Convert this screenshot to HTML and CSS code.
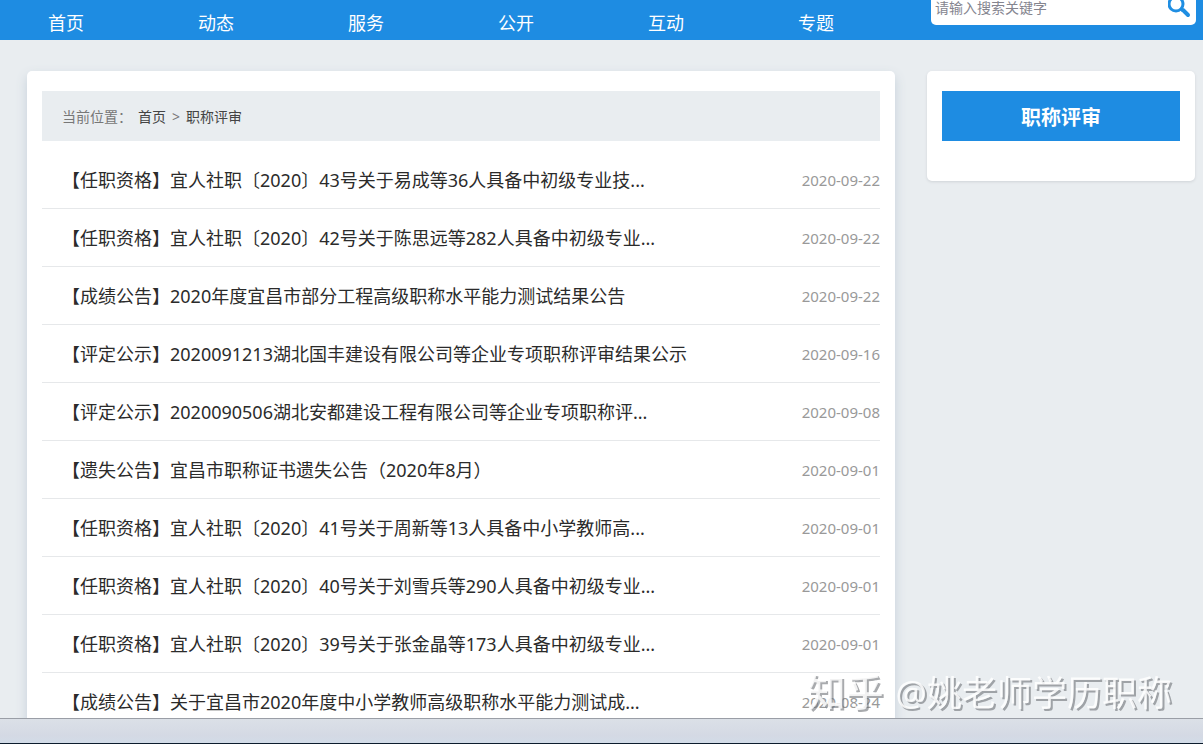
FILE: index.html
```html
<!DOCTYPE html>
<html lang="zh-CN">
<head>
<meta charset="utf-8">
<meta name="viewport" content="width=device-width, initial-scale=1">
<title>职称评审</title>
<link rel="stylesheet" href="styles.css">
</head>
<body class="page">
<header class="topbar">
  <nav class="nav">
    <a class="nav-link" href="#">首页</a>
    <a class="nav-link" href="#">动态</a>
    <a class="nav-link" href="#">服务</a>
    <a class="nav-link" href="#">公开</a>
    <a class="nav-link" href="#">互动</a>
    <a class="nav-link" href="#">专题</a>
  </nav>
  <form class="search">
    <input class="search-input" type="text" placeholder="请输入搜索关键字" aria-label="请输入搜索关键字">
    <button class="search-button" type="button" aria-label="搜索">
      <svg class="search-icon" viewBox="0 0 24 20" fill="none" stroke="#1f8ee2"><circle cx="8" cy="4" r="7" stroke-width="3"/><path d="M13 9l2 2" stroke-width="3"/><path d="M15 10l5 5" stroke-width="4" stroke-linecap="round"/></svg>
    </button>
  </form>
</header>
<div class="content">
  <main class="card main">
    <div class="crumbs">
      <span>当前位置：</span>
      <a class="crumb" href="#">首页</a>
      <span>&gt;</span>
      <a class="crumb" href="#">职称评审</a>
    </div>
    <ul class="list">
      <li class="row"><a class="title" href="#">【任职资格】宜人社职〔2020〕43号关于易成等36人具备中初级专业技...</a><time class="date">2020-09-22</time></li>
      <li class="row"><a class="title" href="#">【任职资格】宜人社职〔2020〕42号关于陈思远等282人具备中初级专业...</a><time class="date">2020-09-22</time></li>
      <li class="row"><a class="title" href="#">【成绩公告】2020年度宜昌市部分工程高级职称水平能力测试结果公告</a><time class="date">2020-09-22</time></li>
      <li class="row"><a class="title" href="#">【评定公示】2020091213湖北国丰建设有限公司等企业专项职称评审结果公示</a><time class="date">2020-09-16</time></li>
      <li class="row"><a class="title" href="#">【评定公示】2020090506湖北安都建设工程有限公司等企业专项职称评...</a><time class="date">2020-09-08</time></li>
      <li class="row"><a class="title" href="#">【遗失公告】宜昌市职称证书遗失公告（2020年8月）</a><time class="date">2020-09-01</time></li>
      <li class="row"><a class="title" href="#">【任职资格】宜人社职〔2020〕41号关于周新等13人具备中小学教师高...</a><time class="date">2020-09-01</time></li>
      <li class="row"><a class="title" href="#">【任职资格】宜人社职〔2020〕40号关于刘雪兵等290人具备中初级专业...</a><time class="date">2020-09-01</time></li>
      <li class="row"><a class="title" href="#">【任职资格】宜人社职〔2020〕39号关于张金晶等173人具备中初级专业...</a><time class="date">2020-09-01</time></li>
      <li class="row"><a class="title" href="#">【成绩公告】关于宜昌市2020年度中小学教师高级职称水平能力测试成...</a><time class="date">2020-08-24</time></li>
    </ul>
  </main>
  <aside class="card side">
    <a class="side-title" href="#">职称评审</a>
  </aside>
</div>
<div class="watermark"><span class="brand">知乎</span><span>@姚老师学历职称</span></div>
<footer class="statusbar"></footer>
</body>
</html>
```

FILE: styles.css
```css
* { box-sizing: border-box; }

.page {
  display: flex;
  flex-direction: column;
  height: 100vh;
  margin: 0;
  overflow: hidden;
  background: #e9edf0;
  color: #2b2b2b;
  font-family: "Noto Sans", "Noto Sans CJK SC", sans-serif;
  font-size: 14px;
}

a { color: inherit; text-decoration: none; }

.topbar {
  display: flex;
  flex: none;
  justify-content: space-between;
  align-items: flex-start;
  height: 40px;
  padding: 0 7px 0 48px;
  background: #1e8ce2;
}

.nav { display: flex; gap: 114px; }

.nav-link {
  color: #fff;
  font-size: 18px;
  line-height: 46px;
  white-space: nowrap;
}

.search {
  display: flex;
  flex: none;
  width: 265px;
  height: 25px;
  padding: 0 4px;
  background: #fff;
  border-radius: 0 0 5px 5px;
}

.search-input {
  flex: 1;
  min-width: 0;
  height: 16px;
  padding: 0;
  border: 0;
  outline: 0;
  background: none;
  font: inherit;
  line-height: 16px;
}

.search-input::placeholder { color: #85858f; }

.search-button {
  width: 24px;
  height: 20px;
  padding: 0;
  border: 0;
  background: none;
}

.search-icon { display: block; width: 24px; height: 20px; }

.content {
  display: flex;
  flex: 1;
  gap: 32px;
  align-items: flex-start;
  min-height: 0;
  padding: 31px 8px 0 27px;
  overflow: hidden;
}

.card {
  padding: 20px 15px;
  background: #fff;
  border-radius: 5px;
}

.main { flex: 1; min-width: 0; box-shadow: 0 5px 12px #c5d0da; }

.side {
  flex: none;
  width: 268px;
  padding-bottom: 40px;
  box-shadow: 0 1px 3px #cfd3d7;
}

.side-title {
  display: block;
  height: 50px;
  background: #1e8ce2;
  color: #fff;
  font-size: 20px;
  font-weight: 700;
  line-height: 54px;
  text-align: center;
}

.crumbs {
  display: flex;
  gap: 6px;
  height: 50px;
  padding: 0 20px;
  background: #e9edf0;
  color: #777;
  line-height: 52px;
}

.crumb { color: #444; }

.list { margin: 10px 0 0; padding: 0; list-style: none; }

.row {
  display: flex;
  justify-content: space-between;
  height: 58px;
  padding-left: 20px;
  border-bottom: 1px solid #e6e8ea;
  line-height: 58px;
  white-space: nowrap;
}

.title {
  overflow: hidden;
  font-size: 18px;
  text-overflow: ellipsis;
}

.date { color: #999; font-size: 15px; }

.watermark {
  position: fixed;
  right: 31px;
  bottom: 26px;
  display: flex;
  align-items: baseline;
  gap: 12px;
  color: rgba(255, 255, 255, 0.85);
  font-size: 35px;
  line-height: 50px;
  text-shadow: 2px 2px 0 rgba(110, 114, 118, 0.6);
  pointer-events: none;
}

.brand { font-size: 38px; font-weight: 500; }

.statusbar {
  flex: none;
  height: 26px;
  border-top: 1px solid #9a9ea6;
  border-bottom: 1px solid #0c1c2c;
  background: linear-gradient(#dbe0e7, #d4d9e4 70%, #d2dce8);
}
```
